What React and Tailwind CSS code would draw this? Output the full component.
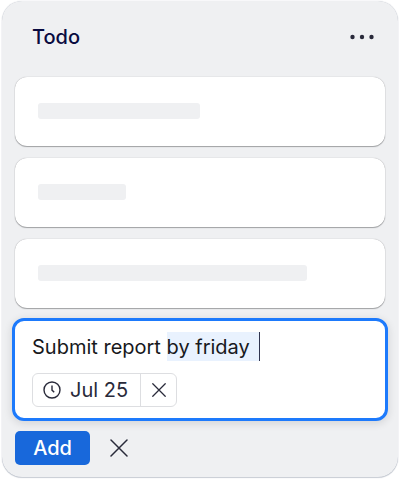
import React, { useState } from "react";

const cards = [
  { id: 1, width: "w-[162px]" },
  { id: 2, width: "w-[88px]" },
  { id: 3, width: "w-[269px]" },
];

const CrossIcon = ({ className }) => (
  <svg
    viewBox="0 0 18 18"
    fill="none"
    stroke="currentColor"
    strokeLinecap="round"
    className={className}
    aria-hidden="true"
  >
    <path d="M1 1l16 16M17 1L1 17" />
  </svg>
);

const ClockIcon = () => (
  <svg
    viewBox="0 0 18 18"
    fill="none"
    stroke="currentColor"
    strokeWidth="1.4"
    className="size-[18px]"
    aria-hidden="true"
  >
    <circle cx="9" cy="9" r="8" />
    <path d="M9 4.5v4.6l2.2 2.2" />
  </svg>
);

const MoreIcon = () => (
  <svg viewBox="0 0 24 6" fill="currentColor" className="h-1.5 w-6" aria-hidden="true">
    <circle cx="2.5" cy="3" r="2.2" />
    <circle cx="12" cy="3" r="2.2" />
    <circle cx="21.5" cy="3" r="2.2" />
  </svg>
);

const App = () => {
  const [title, setTitle] = useState("Submit report by friday ");

  return (
    <div className="bg-white px-0.5 pt-px pb-0.5 font-['Inter',sans-serif] text-[20px] leading-7">
      <section className="rounded-[20px] bg-[#eff0f2] px-[13px] pb-3 shadow-[0_0_1px_rgba(9,30,66,0.3),0_1px_1px_rgba(9,30,66,0.2)]">
        {/* List header */}
        <header className="flex h-19 items-center justify-between pr-[11px] pb-1 pl-[17px]">
          <h2 className="font-medium text-[#090b40]">Todo</h2>
          <button type="button" aria-label="List actions" className="text-[#292a3a]">
            <MoreIcon />
          </button>
        </header>

        {/* Placeholder cards */}
        <ul className="flex flex-col gap-3">
          {cards.map((card) => (
            <li
              key={card.id}
              className="flex h-[69px] items-center rounded-xl bg-white px-[23px] pb-0.5 shadow-[0_0_1px_rgba(30,31,33,0.4),0_1px_1px_rgba(30,31,33,0.35)]"
            >
              <span className={`h-4 rounded-[3px] bg-[#eff0f2] ${card.width}`} />
            </li>
          ))}
        </ul>

        {/* New card */}
        <form onSubmit={(e) => e.preventDefault()}>
          <div className="-mx-[3px] mt-[10px] rounded-xl border-3 border-[#1d7afc] bg-white px-[17px] pt-[11px] pb-[11px] shadow-[0_2px_8px_rgba(30,31,33,0.14)]">
            <div className="relative">
              <span className="absolute top-0 left-[135px] h-[29px] w-[93px] border-r border-[#30354f] bg-[#e9f2fe]" />
              <input
                type="text"
                aria-label="Card title"
                value={title}
                onChange={(e) => setTitle(e.target.value)}
                className="relative block h-[29px] w-full bg-transparent text-[#17181c] outline-none"
              />
            </div>
            <div className="mt-3 flex h-[34px] w-fit rounded-md border border-[#dddee1] text-[#292a3a]">
              <button
                type="button"
                className="flex items-center gap-[9px] border-r border-[#dddee1] pr-3 pl-[10px]"
              >
                <ClockIcon />
                Jul 25
              </button>
              <button
                type="button"
                aria-label="Remove date"
                className="flex w-[35px] items-center justify-center"
              >
                <CrossIcon className="size-[14px] stroke-[1.6px]" />
              </button>
            </div>
          </div>

          <div className="mt-[10px] flex items-center gap-5">
            <button
              type="submit"
              className="h-[34px] w-[75px] rounded-[5px] bg-[#1868db] font-medium text-white"
            >
              Add
            </button>
            <button type="button" aria-label="Cancel" className="text-[#292a3a]">
              <CrossIcon className="size-[18px] stroke-[1.5px]" />
            </button>
          </div>
        </form>
      </section>
    </div>
  );
};

export default App;
